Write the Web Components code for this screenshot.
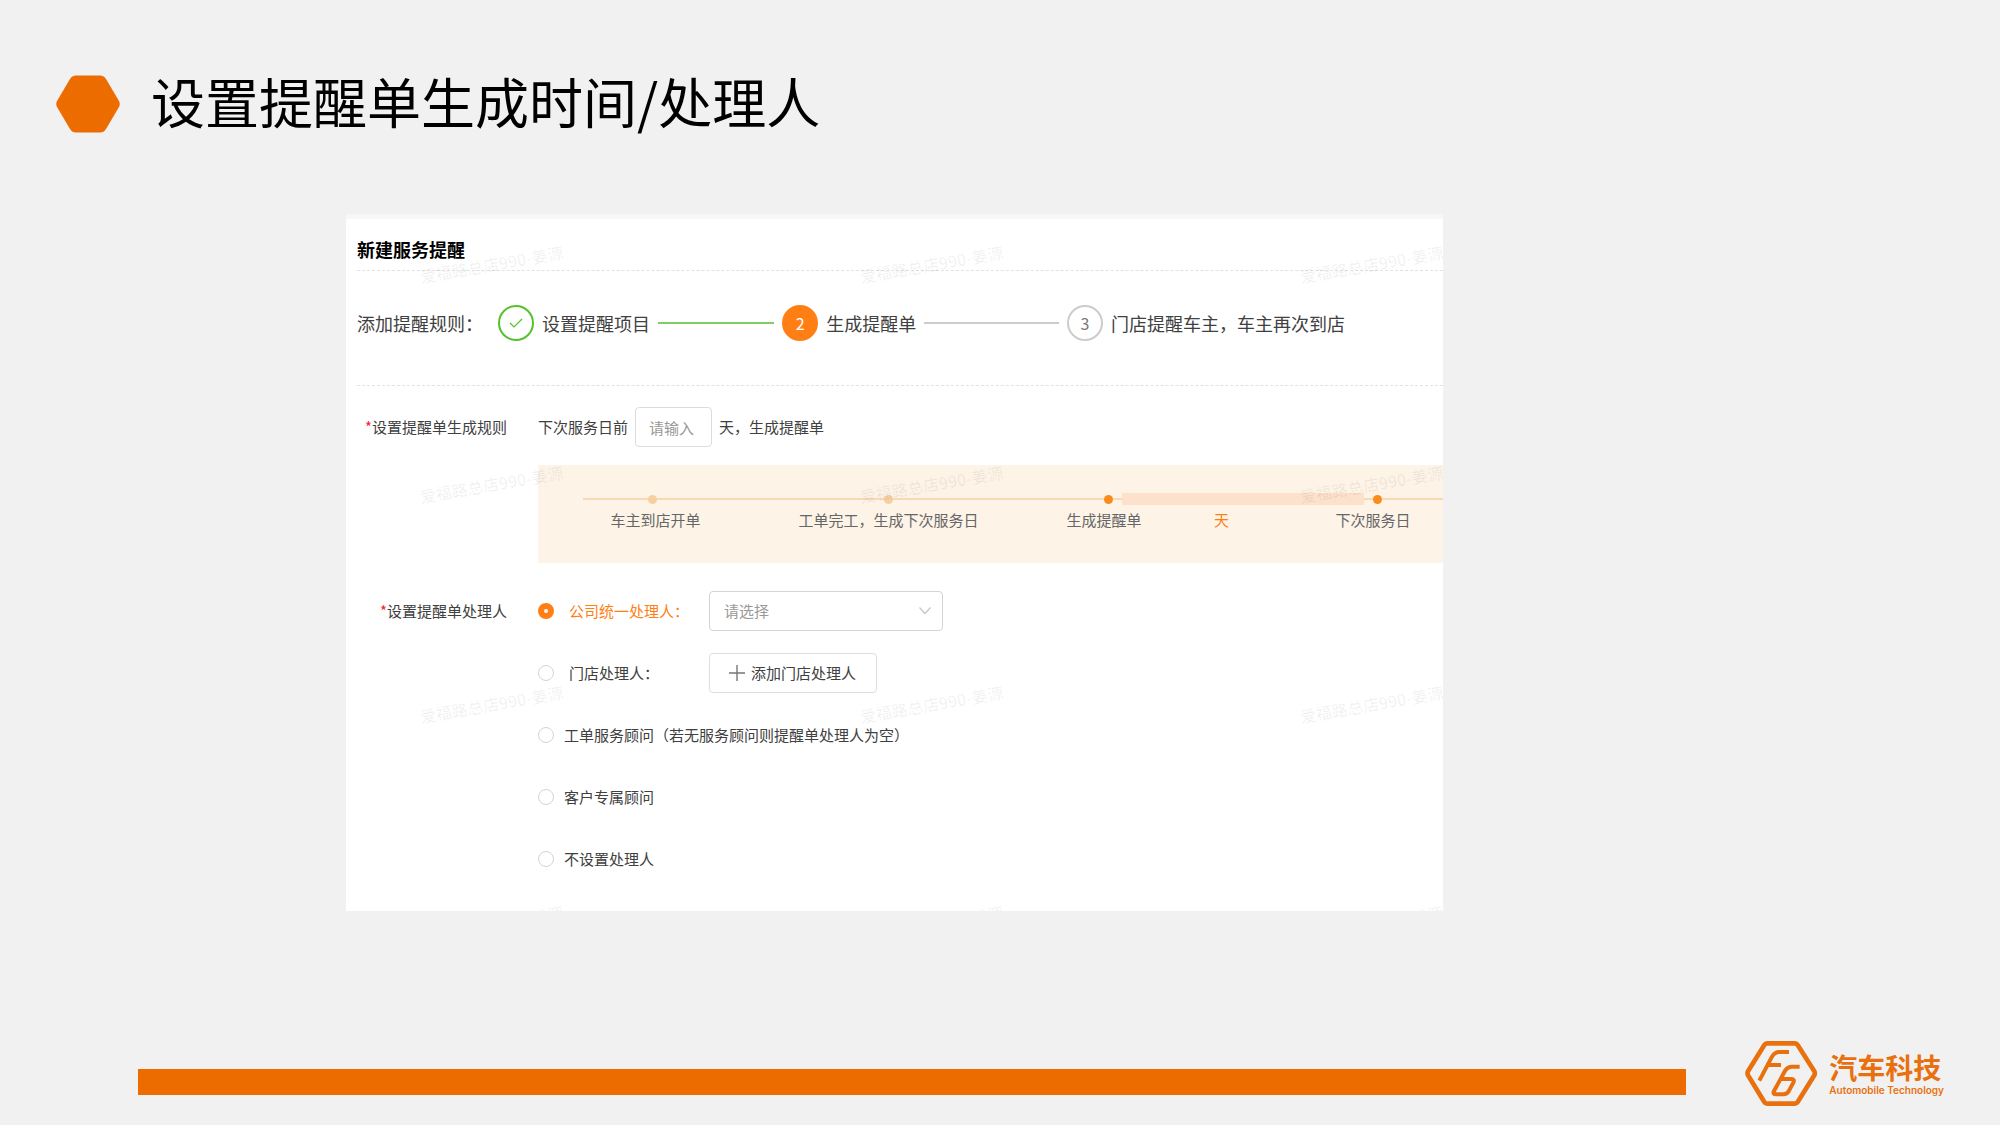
<!DOCTYPE html>
<html lang="zh-CN">
<head>
<meta charset="utf-8">
<title>设置提醒单生成时间/处理人</title>
<style>
  html { --brand: #ed6c00; --accent: #ff7f14; --ink: #404040; }
  body { margin: 0; background: #f1f1f1; color: var(--ink); font: 15px/24px "Noto Sans CJK SC", "Noto Sans", sans-serif; }
</style>
</head>
<body>
<slide-page>
  <slide-title slot="title">设置提醒单生成时间/处理人</slide-title>
  <reminder-card>
    <span slot="heading">新建服务提醒</span>
    <step-bar slot="steps">
      <step-item state="done">设置提醒项目</step-item>
      <step-item state="active" number="2">生成提醒单</step-item>
      <step-item state="wait" number="3">门店提醒车主，车主再次到店</step-item>
    </step-bar>
    <form-row caption="设置提醒单生成规则"><rule-field></rule-field></form-row>
    <form-row caption="设置提醒单处理人">
      <handler-list>
        <radio-option checked wide>公司统一处理人：<select-box slot="control"></select-box></radio-option>
        <radio-option wide>门店处理人：<add-button slot="control">添加门店处理人</add-button></radio-option>
        <radio-option>工单服务顾问（若无服务顾问则提醒单处理人为空）</radio-option>
        <radio-option>客户专属顾问</radio-option>
        <radio-option>不设置处理人</radio-option>
      </handler-list>
    </form-row>
  </reminder-card>
  <brand-logo slot="logo"></brand-logo>
</slide-page>

<script>
const define = (name, html, setup) => customElements.define(name, class extends HTMLElement {
  constructor() {
    super();
    const t = document.createElement('template');
    t.innerHTML = html;
    this.attachShadow({ mode: 'open' }).append(t.content.cloneNode(true));
  }
  connectedCallback() { if (setup) setup(this, this.shadowRoot); }
});

define('slide-page', `
<style>
  :host { display: flex; flex-direction: column; min-height: 100vh; }
  header { padding: 64px 56px 0; }
  main { margin: 70px 27.85% 40px 17.3%; }
  footer { display: flex; align-items: center; gap: 58px; margin-top: auto; padding: 0 56px 17px 138px; }
  .bar { flex: 1; height: 26px; margin-top: 16px; background: var(--brand); }
</style>
<header><slot name="title"></slot></header>
<main><slot></slot></main>
<footer><div class="bar"></div><slot name="logo"></slot></footer>`);

define('slide-title', `
<style>
  :host { display: flex; align-items: center; gap: 31px; color: #000; }
  h1 { margin: 0; padding-bottom: 6px; font-size: 54px; line-height: 74px; font-weight: 400; }
  svg { display: block; flex: none; }
</style>
<svg width="64" height="58" viewBox="0 0 64 58" aria-hidden="true"><path d="M20 .5H44Q48 .5 50 4L63 26Q64.500 29 63 32L50 54Q48 57.500 44 57.500H20Q16 57.500 14 54L1 32Q-.5 29 1 26L14 4Q16 .5 20 .5Z" fill="#ed6c00"/></svg>
<h1><slot></slot></h1>`);

define('water-mark', `
<style>
  :host { position: absolute; inset: 0; overflow: hidden; pointer-events: none; }
  .grid { display: grid; grid-template-columns: repeat(3, 440px); grid-auto-rows: 220px; margin: -65px 0 0 -74px; }
  span { place-self: center; white-space: nowrap; font-size: 16px; font-weight: 500; color: rgba(0,0,0,.06); transform: rotate(-9.8deg); }
</style>
<div class="grid"></div>`, (el, root) => {
  const grid = root.querySelector('.grid');
  if (grid.children.length) return;
  for (let i = 0; i < 12; i++) {
    const s = document.createElement('span');
    s.textContent = '爱福路总店990-姜源';
    grid.append(s);
  }
});

define('reminder-card', `
<style>
  :host { display: block; position: relative; background: #fff; border-top: 5px solid #f7f7f7; padding-bottom: 32px; }
  h2 { margin: 0 0 0 11px; padding: 16px 0 7px; font-size: 18px; line-height: 28px; font-weight: 700; color: #000; border-bottom: 1px dashed #e2e2e2; }
  .steps { margin-left: 11px; padding: 34px 98px 44px 0; border-bottom: 1px dashed #e2e2e2; }
  .form { display: flex; flex-direction: column; gap: 28px; padding-top: 21px; }
</style>
<h2><slot name="heading"></slot></h2>
<div class="steps"><slot name="steps"></slot></div>
<div class="form"><slot></slot></div>
<water-mark></water-mark>`);

define('step-bar', `
<style>
  :host { display: flex; align-items: center; font-size: 18px; line-height: 36px; }
  .name { margin-right: 15px; white-space: nowrap; }
  .items { flex: 1; display: flex; gap: 8px; }
</style>
<span class="name">添加提醒规则：</span>
<div class="items"><slot></slot></div>`);

define('step-item', `
<style>
  :host { display: flex; align-items: center; gap: 8px; white-space: nowrap; }
  :host([state=done]) { flex: 113 0 auto; }
  :host([state=active]) { flex: 131 0 auto; }
  .dot { box-sizing: border-box; width: 36px; height: 36px; border-radius: 50%; border: 2px solid #ccc; display: flex; align-items: center; justify-content: center; font-size: 16px; color: #777; }
  .line { flex: 1; height: 2px; background: #ccc; }
  svg { display: none; }
  :host([state=done]) .dot { border-color: #54c22b; }
  :host([state=done]) svg { display: block; }
  :host([state=done]) .line { background: #7fcd66; }
  :host([state=active]) .dot { border-color: var(--accent); background: var(--accent); color: #fff; }
  :host([state=wait]) .line { display: none; }
</style>
<span class="dot"><svg width="14" height="12" viewBox="0 0 14 12" fill="none" stroke="#54c22b" stroke-width="1.200"><path d="M1 6L5 10L13 2"/></svg></span>
<span><slot></slot></span>
<span class="line"></span>`, (el, root) => {
  const n = el.getAttribute('number');
  if (n) root.querySelector('.dot').textContent = n;
});

define('form-row', `
<style>
  :host { display: grid; grid-template-columns: 161px minmax(0, 1fr); column-gap: 31px; }
  .caption { text-align: right; line-height: 40px; white-space: nowrap; }
  i { font-style: normal; color: #f5222d; }
</style>
<div class="caption"><i>*</i><span></span></div>
<div><slot></slot></div>`, (el, root) => {
  root.querySelector('span').textContent = el.getAttribute('caption');
});

define('rule-field', `
<style>
  :host { display: block; }
  .line { display: flex; align-items: center; gap: 7px; margin-bottom: 18px; }
  input { box-sizing: border-box; width: 77px; height: 40px; padding: 0 13px; border: 1px solid #dcdcdc; border-radius: 4px; background: #fff; font: inherit; color: inherit; outline: none; }
  input::placeholder { color: #999; opacity: 1; }
</style>
<div class="line"><label for="days">下次服务日前</label><input id="days" placeholder="请输入"><span>天，生成提醒单</span></div>
<time-line></time-line>`);

define('time-line', `
<style>
  :host { display: block; box-sizing: border-box; height: 98px; padding-top: 28px; background: #fdf3e7; color: #666; }
  .track { display: flex; align-items: center; height: 12px; padding-left: 45px; }
  .seg { height: 2px; background: #f9d8b4; }
  .span { height: 12px; background: #fde1ca; }
  .dot { width: 9px; height: 9px; flex: none; border-radius: 50%; background: #f7cf9f; }
  .hot { background: #fb8b1d; }
  .names { display: grid; grid-template-columns: 235fr 231fr 200fr 35fr 64fr 140fr; margin-top: 3px; }
  .names span { justify-self: center; white-space: nowrap; }
  .names .days { color: var(--accent); }
  .names .last { grid-column: 6; }
</style>
<div class="track">
  <div class="seg" style="flex:65"></div><div class="dot"></div>
  <div class="seg" style="flex:228"></div><div class="dot"></div>
  <div class="seg" style="flex:211"></div><div class="dot hot"></div>
  <div class="seg" style="flex:9"></div><div class="span" style="flex:243"></div><div class="seg" style="flex:9"></div><div class="dot hot"></div>
  <div class="seg" style="flex:61"></div>
</div>
<div class="names"><span>车主到店开单</span><span>工单完工，生成下次服务日</span><span>生成提醒单</span><span class="days">天</span><span class="last">下次服务日</span></div>`);

define('handler-list', `
<style>:host { display: flex; flex-direction: column; gap: 22px; }</style>
<slot></slot>`);

define('radio-option', `
<style>
  :host { display: flex; align-items: center; height: 40px; }
  label { display: flex; align-items: center; gap: 10px; white-space: nowrap; }
  :host([wide]) label { gap: 15px; width: 171px; }
  :host([checked]) { --text: var(--accent); }
  label span { color: var(--text, inherit); }
  input { appearance: none; box-sizing: border-box; width: 16px; height: 16px; margin: 0; border: 1px solid #d4d4d4; border-radius: 50%; background: #fff; }
  input:checked { border: 6px solid var(--accent); }
</style>
<label><input type="radio"><span><slot></slot></span></label>
<slot name="control"></slot>`, (el, root) => {
  root.querySelector('input').checked = el.hasAttribute('checked');
});

define('select-box', `
<style>
  :host { display: grid; align-items: center; width: 234px; }
  select, svg { grid-area: 1 / 1; }
  select { appearance: none; box-sizing: border-box; width: 100%; height: 40px; padding: 0 14px; border: 1px solid #d4d4d4; border-radius: 4px; background: #fff; font: inherit; color: #999; outline: none; }
  svg { justify-self: end; margin-right: 11px; pointer-events: none; }
</style>
<select aria-label="公司统一处理人"><option>请选择</option></select>
<svg width="14" height="10" viewBox="0 0 14 10" fill="none" stroke="#c4c4c4" stroke-width="1.200"><path d="M1.500 1.500L7 7.500L12.500 1.500"/></svg>`);

define('add-button', `
<style>
  :host { display: block; }
  button { display: flex; align-items: center; gap: 6px; height: 40px; padding: 0 20px 0 19px; border: 1px solid #dedede; border-radius: 4px; background: #fff; font: inherit; color: inherit; white-space: nowrap; }
</style>
<button type="button"><svg width="16" height="16" viewBox="0 0 16 16" stroke="#777" stroke-width="1.400"><path d="M0 8H16M8 0V16"/></svg><span><slot></slot></span></button>`);

define('brand-logo', `
<style>
  :host { display: flex; align-items: center; gap: 11px; color: #e8700f; }
  svg { display: block; }
  .text { padding-bottom: 2px; }
  .name { margin-bottom: 1px; font-size: 28px; line-height: 32px; font-weight: 700; }
  .sub { font: 600 10px/12px Inter, sans-serif; white-space: nowrap; }
</style>
<svg width="74" height="68" viewBox="15 18 222 204" fill="none" stroke="#e8700f" stroke-linejoin="round" aria-hidden="true">
  <path stroke-width="14" d="M84 28H168Q173 28 176 33L226 112Q229 118 226 124L176 204Q173 209 168 209H84Q79 209 76 204L27 124Q24 118 27 112L76 33Q79 28 84 28Z"/>
  <path stroke-width="12" d="M150 54H121Q107 54 99 68L61 140M81 93H126"/>
  <path stroke-width="12" d="M182 98H158Q146 98 139 109L105 171Q100 181 112 181H133Q144 181 149 172L163 146Q168 135 157 135H127"/>
</svg>
<div class="text"><div class="name">汽车科技</div><div class="sub">Automobile Technology</div></div>`);
</script>
</body>
</html>
